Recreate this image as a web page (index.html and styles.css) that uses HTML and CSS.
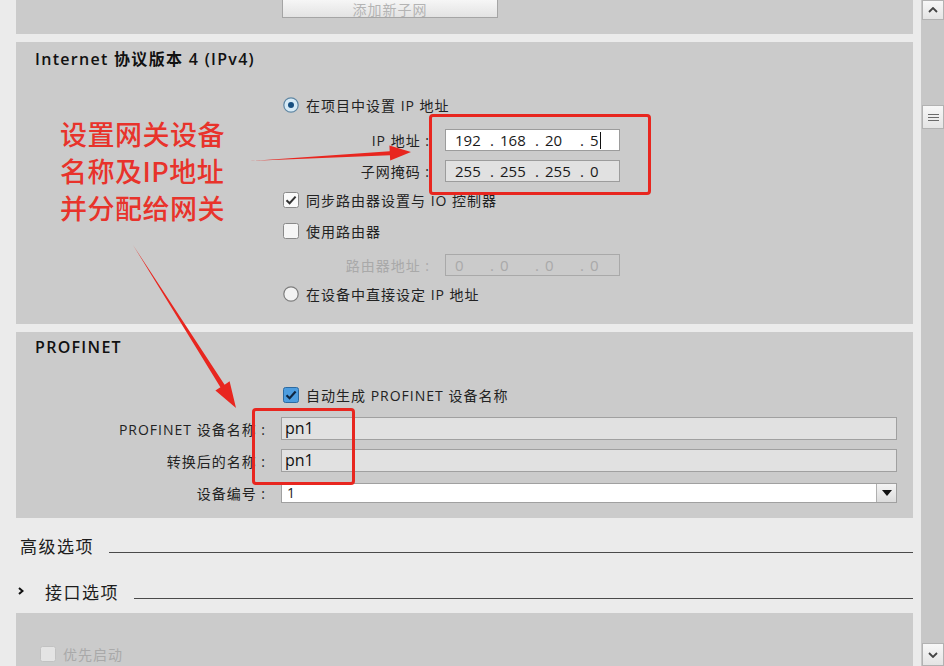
FILE: index.html
```html
<!DOCTYPE html>
<html lang="zh-CN">

<head>
    <meta charset="UTF-8">
    <meta name="viewport" content="width=device-width, initial-scale=1.0">
    <title>PROFINET 接口属性</title>
    <link rel="stylesheet" href="styles.css">
</head>

<body>
    <div class="window">
        <div class="content">

            <!-- 子网 -->
            <section class="panel panel-top">
                <button class="btn-sub" disabled>添加新子网</button>
            </section>

            <!-- IPv4 -->
            <section class="panel panel-ip">
                <h2 class="panel-title">Internet 协议版本 4 (IPv4)</h2>
                <div class="opts">
                    <div class="row">
                        <svg class="radio" width="16" height="16" viewBox="0 0 16 16">
                            <circle cx="8" cy="8" r="7.2" fill="#d6eaf6" stroke="#5f86a3" stroke-width="1.2"/>
                            <circle cx="8" cy="8" r="3" fill="#174f80"/>
                        </svg>
                        <span class="txt">在项目中设置 IP 地址</span>
                    </div>
                    <div class="row mt-13">
                        <span class="lbl">IP 地址 :</span>
                        <div class="ipbox">
                            <span class="oct">192</span><span class="dot">.</span>
                            <span class="oct">168</span><span class="dot">.</span>
                            <span class="oct">20</span><span class="dot">.</span>
                            <span class="oct last">5<i class="caret"></i></span>
                        </div>
                    </div>
                    <div class="row">
                        <span class="lbl">子网掩码 :</span>
                        <div class="ipbox grey">
                            <span class="oct">255</span><span class="dot">.</span>
                            <span class="oct">255</span><span class="dot">.</span>
                            <span class="oct">255</span><span class="dot">.</span>
                            <span class="oct last">0</span>
                        </div>
                    </div>
                    <div class="row mt-7">
                        <svg class="check" width="16" height="16" viewBox="0 0 16 16">
                            <rect x="0.5" y="0.5" width="15" height="15" rx="2" fill="#fafafa" stroke="#8a8a8a"/>
                            <path d="M3.5 8.2 L6.6 11.2 L12.6 4.6" fill="none" stroke="#333" stroke-width="2"/>
                        </svg>
                        <span class="txt">同步路由器设置与 IO 控制器</span>
                    </div>
                    <div class="row">
                        <svg class="check" width="16" height="16" viewBox="0 0 16 16">
                            <rect x="0.5" y="0.5" width="15" height="15" rx="2" fill="#f6f6f6" stroke="#8a8a8a"/>
                        </svg>
                        <span class="txt">使用路由器</span>
                    </div>
                    <div class="row mt-12">
                        <span class="lbl off">路由器地址 :</span>
                        <div class="ipbox off">
                            <span class="oct">0</span><span class="dot">.</span>
                            <span class="oct">0</span><span class="dot">.</span>
                            <span class="oct">0</span><span class="dot">.</span>
                            <span class="oct last">0</span>
                        </div>
                    </div>
                    <div class="row mt-7">
                        <svg class="radio" width="16" height="16" viewBox="0 0 16 16">
                            <circle cx="8" cy="8" r="7.2" fill="#f2f2f2" stroke="#7d7d7d" stroke-width="1.2"/>
                        </svg>
                        <span class="txt">在设备中直接设定 IP 地址</span>
                    </div>
                </div>
            </section>

            <!-- PROFINET -->
            <section class="panel panel-pn">
                <h2 class="panel-title">PROFINET</h2>
                <div class="row pn-auto">
                    <svg class="check" width="16" height="16" viewBox="0 0 16 16">
                        <rect x="0.5" y="0.5" width="15" height="15" rx="2" fill="#4d9ddf" stroke="#2c6aa1"/>
                        <path d="M3.5 8.2 L6.6 11.2 L12.6 4.6" fill="none" stroke="#0f2640" stroke-width="2.2"/>
                    </svg>
                    <span class="txt">自动生成 PROFINET 设备名称</span>
                </div>
                <div class="row pn-row first">
                    <span class="lbl">PROFINET 设备名称 :</span>
                    <div class="tbox">pn1</div>
                </div>
                <div class="row pn-row">
                    <span class="lbl">转换后的名称 :</span>
                    <div class="tbox">pn1</div>
                </div>
                <div class="row pn-row">
                    <span class="lbl">设备编号 :</span>
                    <div class="sel">
                        <span class="sel-val">1</span>
                        <span class="sel-btn">
                            <svg width="10" height="6" viewBox="0 0 10 6"><path d="M0 0 H10 L5 6 Z" fill="#111"/></svg>
                        </span>
                    </div>
                </div>
            </section>

            <div class="sect-head">
                <span class="sect-name">高级选项</span>
                <span class="rule"></span>
            </div>
            <div class="sect-head sub">
                <svg class="chev" width="6" height="8" viewBox="0 0 6 8"><path d="M1 1 L4.5 4 L1 7" fill="none" stroke="#111" stroke-width="2"/></svg>
                <span class="sect-name">接口选项</span>
                <span class="rule"></span>
            </div>

            <section class="panel panel-bottom">
                <div class="row off">
                    <svg class="check" width="16" height="16" viewBox="0 0 16 16">
                        <rect x="0.5" y="0.5" width="15" height="15" rx="2" fill="#e4e4e4" stroke="#c2c2c2"/>
                    </svg>
                    <span class="txt">优先启动</span>
                </div>
            </section>
        </div>

        <div class="scrollbar">
            <div class="sb-btn">
                <svg width="10" height="6" viewBox="0 0 10 6"><path d="M1 5 L5 1 L9 5" fill="none" stroke="#444" stroke-width="1.8"/></svg>
            </div>
            <div class="sb-thumb">
                <span></span><span></span><span></span>
            </div>
            <div class="sb-fill"></div>
            <div class="sb-btn">
                <svg width="10" height="6" viewBox="0 0 10 6"><path d="M1 1 L5 5 L9 1" fill="none" stroke="#444" stroke-width="1.8"/></svg>
            </div>
        </div>

        <!-- 批注 -->
        <div class="note">设置网关设备<br>名称及IP地址<br>并分配给网关</div>
        <div class="mark mark-ip"></div>
        <div class="mark mark-pn"></div>
        <svg class="arrows" width="944" height="666" viewBox="0 0 944 666">
            <polygon points="250,161 389.7,151.3 389.4,145.6 411,152 390.2,160.4 389.9,155.3" fill="#e8261f"/>
            <polygon points="133,245 224.6,384.7 229.6,381.2 236,408 215.4,390.6 220.4,387.3" fill="#e8261f"/>
        </svg>
    </div>
</body>

</html>
```

FILE: styles.css
```css
* {
    box-sizing: border-box;
}

body {
    margin: 0;
    background: #ebebeb;
    font-family: "Open Sans", "Noto Sans CJK SC", sans-serif;
    color: #222;
}

.window {
    position: relative;
    width: 944px;
    height: 666px;
    overflow: hidden;
    display: flex;
    background: #ebebeb;
}

.content {
    width: 921px;
    padding: 0 8px 0 16px;
    display: flex;
    flex-direction: column;
}

.panel {
    background: #cbcbcb;
}

.panel-top {
    height: 34px;
    padding-left: 266px;
}

.btn-sub {
    display: block;
    width: 216px;
    height: 18px;
    padding: 0;
    border: 1px solid #a5a5a5;
    border-top: none;
    background: linear-gradient(#f6f6f6, #e3e3e3);
    color: #b4b4b4;
    font-family: "Noto Sans CJK SC", sans-serif;
    font-size: 14px;
    line-height: 16px;
    letter-spacing: 1px;
}

.panel-title {
    margin: 0;
    padding-left: 19px;
    font-size: 16px;
    line-height: 22px;
    font-weight: 600;
    letter-spacing: 1.3px;
    color: #111;
}

.panel-ip {
    height: 282px;
    margin-top: 8px;
    padding-top: 6px;
}

.opts {
    display: flex;
    flex-direction: column;
    gap: 9px;
    margin-top: 24px;
    padding-left: 267px;
}

.row {
    display: flex;
    align-items: center;
    height: 22px;
    font-size: 14px;
    letter-spacing: 1px;
}

.mt-13 {
    margin-top: 4px;
}

.mt-12 {
    margin-top: 3px;
}

.mt-7 {
    margin-top: -2px;
}

.radio,
.check {
    flex: none;
    margin-right: 7px;
}

.lbl {
    width: 147px;
    text-align: right;
    margin-right: 15px;
}

.off,
.lbl.off {
    color: #a9a9a9;
}

.ipbox {
    display: flex;
    align-items: center;
    width: 175px;
    height: 22px;
    padding-left: 9px;
    border: 1px solid #9c9c9c;
    background: #fff;
    font-size: 15px;
    letter-spacing: 0;
    color: #1a1a1a;
}

.ipbox.grey {
    background: #e1e1e1;
}

.ipbox.off {
    background: #cbcbcb;
    border-color: #a9a9a9;
    color: #a9a9a9;
}

.oct {
    width: 35px;
}

.oct.last {
    width: auto;
    display: flex;
    align-items: center;
}

.dot {
    width: 10px;
}

.caret {
    display: inline-block;
    width: 1px;
    height: 17px;
    margin-left: 1px;
    background: #111;
}

.panel-pn {
    height: 186px;
    margin-top: 8px;
    padding: 4px 16px 0 0;
}

.pn-auto {
    margin-top: 26px;
    padding-left: 267px;
}

.pn-row {
    height: 23px;
    margin-top: 9px;
}

.pn-row.first {
    margin-top: 11px;
}

.pn-row .lbl {
    width: 250px;
}

.tbox {
    flex: 1;
    height: 23px;
    padding-left: 3px;
    border: 1px solid #a0a0a0;
    background: #e1e1e1;
    font-size: 16px;
    line-height: 21px;
    letter-spacing: 0;
    color: #111;
}

.sel {
    flex: 1;
    display: flex;
    height: 20px;
    border: 1px solid #a0a0a0;
    background: #fff;
    font-size: 14px;
    letter-spacing: 0;
}

.sel-val {
    flex: 1;
    padding-left: 5px;
    line-height: 18px;
}

.sel-btn {
    width: 20px;
    display: flex;
    align-items: center;
    justify-content: center;
    border-left: 1px solid #b0b0b0;
    background: linear-gradient(#f4f4f4, #dcdcdc);
}

.sect-head {
    display: flex;
    align-items: center;
    height: 22px;
    margin-top: 16px;
    padding-left: 4px;
}

.sect-head.sub {
    margin-top: 24px;
    padding-left: 2px;
}

.sect-name {
    font-family: "Noto Sans CJK SC", sans-serif;
    font-size: 17px;
    letter-spacing: 1.5px;
    color: #1d1d1d;
}

.chev {
    margin-right: 21px;
}

.rule {
    flex: 1;
    align-self: flex-end;
    height: 1px;
    margin: 0 0 3px 15px;
    background: #4a4a4a;
}

.panel-bottom {
    flex: 1;
    margin-top: 11px;
    padding: 30px 0 0 24px;
}

.scrollbar {
    width: 23px;
    display: flex;
    flex-direction: column;
    background: #c7c7c7;
    padding-left: 1px;
}

.sb-btn {
    height: 20px;
    display: flex;
    align-items: center;
    justify-content: center;
    border: 1px solid #b2b2b2;
    background: linear-gradient(#f7f7f7, #e4e4e4);
}

.scrollbar .sb-btn:last-child {
    height: 23px;
}

.sb-thumb {
    height: 24px;
    margin-top: 85px;
    display: flex;
    flex-direction: column;
    align-items: center;
    justify-content: center;
    gap: 2px;
    border: 1px solid #b2b2b2;
    background: linear-gradient(#f7f7f7, #e4e4e4);
}

.sb-thumb span {
    width: 11px;
    height: 1px;
    background: #6a6a6a;
}

.sb-fill {
    flex: 1;
}

/* 批注层 */
.note {
    position: absolute;
    left: 60px;
    top: 115px;
    font-family: "Noto Sans CJK SC", sans-serif;
    font-size: 27px;
    line-height: 37px;
    font-weight: 500;
    letter-spacing: 0.5px;
    color: #e8332b;
}

.mark {
    position: absolute;
    border: 3px solid #e8261f;
    border-radius: 4px;
}

.mark-ip {
    left: 429px;
    top: 114px;
    width: 222px;
    height: 81px;
}

.mark-pn {
    left: 252px;
    top: 408px;
    width: 103px;
    height: 77px;
}

.arrows {
    position: absolute;
    left: 0;
    top: 0;
    pointer-events: none;
}
```
